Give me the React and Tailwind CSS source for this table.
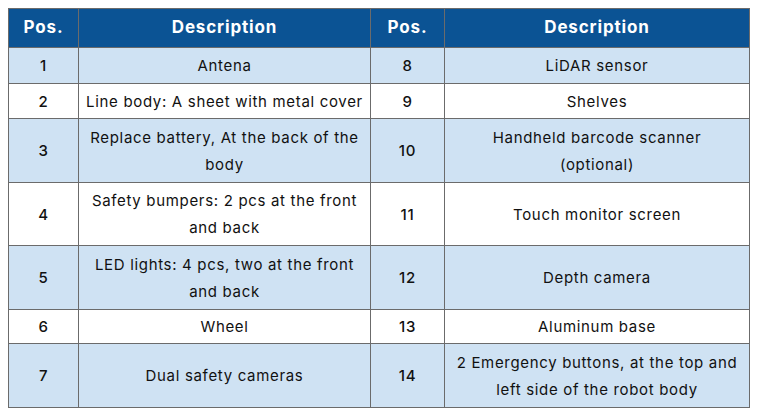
import React from "react";

const rows = [
  { h: "h-[36px]", a: "1", b: "Antena", c: "8", d: "LiDAR sensor", blue: true },
  { h: "h-[35px]", a: "2", b: "Line body: A sheet with metal cover", c: "9", d: "Shelves" },
  {
    h: "h-[64px]",
    a: "3",
    b: ["Replace battery, At the back of the", "body"],
    c: "10",
    d: ["Handheld barcode scanner", "(optional)"],
    blue: true,
  },
  {
    h: "h-[63px]",
    a: "4",
    b: ["Safety bumpers: 2 pcs at the front", "and back"],
    c: "11",
    d: "Touch monitor screen",
  },
  {
    h: "h-[64px]",
    a: "5",
    b: ["LED lights: 4 pcs, two at the front", "and back"],
    c: "12",
    d: "Depth camera",
    blue: true,
  },
  { h: "h-[34px]", a: "6", b: "Wheel", c: "13", d: "Aluminum base" },
  {
    h: "h-[64px]",
    a: "7",
    b: "Dual safety cameras",
    c: "14",
    d: ["2 Emergency buttons, at the top and", "left side of the robot body"],
    blue: true,
  },
];

function Text({ value }) {
  if (Array.isArray(value)) {
    return (
      <>
        {value[0]}
        <br />
        {value[1]}
      </>
    );
  }
  return value;
}

export default function App() {
  return (
    <div className="bg-white w-[760px] h-[415px] pt-2 pl-2 font-['Inter',sans-serif] text-[#111]">
      <table className="table-fixed border-collapse w-[741px]">
        <colgroup>
          <col className="w-[70px]" />
          <col className="w-[292px]" />
          <col className="w-[74px]" />
          <col className="w-[305px]" />
        </colgroup>
        <thead>
          <tr className="h-[39px] bg-[#0b5394] text-white text-[17px] font-bold tracking-[0.05em]">
            <th className="border border-[#6b6b6b]">Pos.</th>
            <th className="border border-[#6b6b6b]">Description</th>
            <th className="border border-[#6b6b6b]">Pos.</th>
            <th className="border border-[#6b6b6b]">Description</th>
          </tr>
        </thead>
        <tbody>
          {rows.map((r) => (
            <tr
              key={r.a}
              className={`${r.h} ${r.blue ? "bg-[#cfe2f3]" : "bg-white"} text-[15px] leading-[27px] tracking-[0.045em]`}
            >
              <td className="border border-[#6b6b6b] text-center font-medium">{r.a}</td>
              <td className="border border-[#6b6b6b] text-center">
                <Text value={r.b} />
              </td>
              <td className="border border-[#6b6b6b] text-center font-medium">{r.c}</td>
              <td className="border border-[#6b6b6b] text-center">
                <Text value={r.d} />
              </td>
            </tr>
          ))}
        </tbody>
      </table>
    </div>
  );
}
